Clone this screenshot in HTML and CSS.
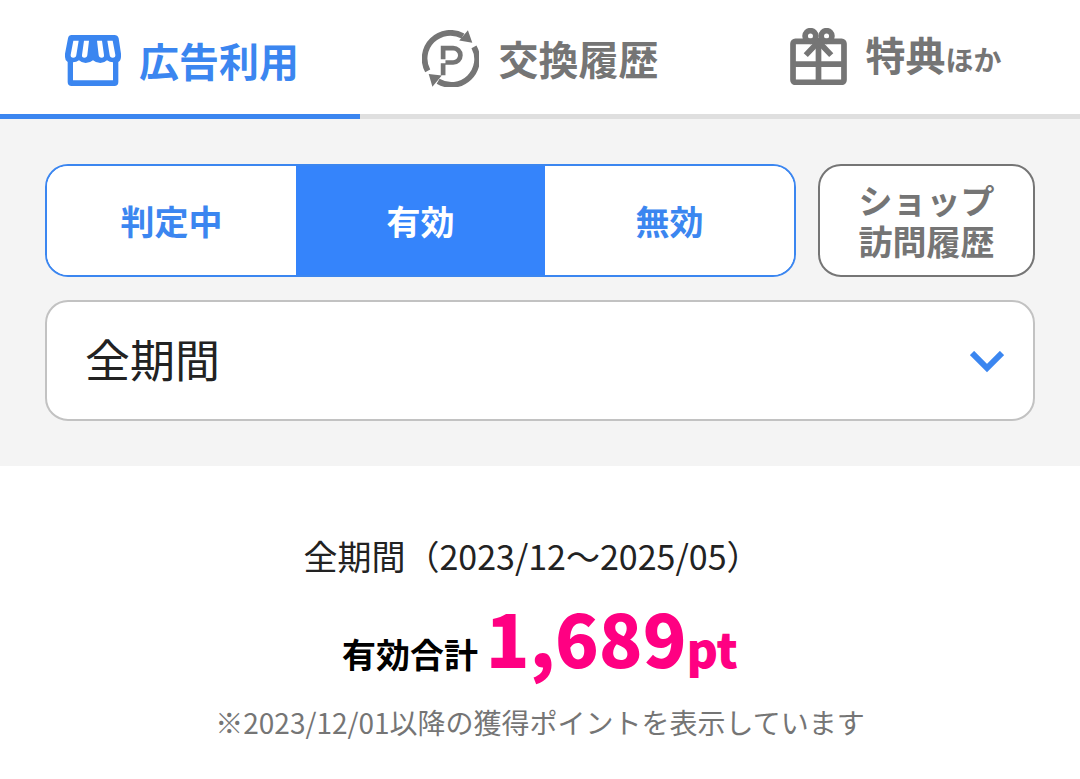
FILE: index.html
```html
<!DOCTYPE html>
<html lang="ja">
<head>
<meta charset="utf-8">
<meta name="viewport" content="width=device-width, initial-scale=1">
<title>広告利用</title>
<link rel="stylesheet" href="styles.css">
</head>
<body>
<nav class="tabs">
  <a class="tab tab-active" href="#ads" aria-current="page">
    <svg class="icon-shop" viewBox="0 0 168 153" aria-hidden="true">
      <path class="solid" d="M20 0H148Q158 0 161 10L168 56V66Q167 78 160 81V141Q160 153 148 153H20Q8 153 8 141V81Q0 76 0 66V56L9 10Q11 0 20 0Z"/>
      <path class="hole" d="M25 17H41L34 60Q33 68 25 68Q16 68 17 59ZM57 17H72L67 60Q66 68 58 68Q50 68 51 60ZM96 17H111L117 60Q118 68 110 68Q102 68 101 60ZM127 17H143L151 59Q152 68 143 68Q135 68 134 60ZM24 82Q34 82 42 76Q50 84 62 84Q75 84 84 76Q93 84 106 84Q118 84 126 76Q134 82 144 82V136H24Z"/>
    </svg>
    <span class="tab-text">広告利用</span>
  </a>
  <a class="tab" href="#exchange">
    <svg class="icon-exchange" viewBox="10 11 170 170" aria-hidden="true">
      <path class="line" d="M27 133A77 77 0 0 1 132 29M165 61A77 77 0 0 1 58 164"/>
      <path class="solid" d="M147 12L160 49L121 42ZM30 142L69 147L41 180Z"/>
      <path class="line letter" d="M73 98V65H103A21 21 0 0 1 103 108H80M73 110V146"/>
    </svg>
    <span class="tab-text">交換履歴</span>
  </a>
  <a class="tab tab-raised" href="#rewards">
    <svg class="icon-gift" viewBox="14 14 168 170" aria-hidden="true">
      <rect class="line" x="22" y="54" width="152" height="122" rx="7"/>
      <path class="line" d="M98 48V176M22 122H174"/>
      <path class="line" d="M60 95L98 55L136 95"/>
      <circle class="line" cx="74" cy="38" r="16"/>
      <circle class="line" cx="122" cy="38" r="16"/>
    </svg>
    <span class="tab-text">特典<small class="tab-small">ほか</small></span>
  </a>
</nav>
<main>
  <section class="filters">
    <div class="filter-row">
      <div class="segments">
        <button class="segment" type="button">判定中</button>
        <button class="segment segment-active" type="button" aria-pressed="true">有効</button>
        <button class="segment" type="button">無効</button>
      </div>
      <button class="visit" type="button">ショップ<br>訪問履歴</button>
    </div>
    <div class="period">
      <select class="period-select" aria-label="期間">
        <option>全期間</option>
      </select>
      <svg class="chevron" viewBox="0 0 34 22" aria-hidden="true"><path d="M2 2L17 17L32 2"/></svg>
    </div>
  </section>
  <section class="summary">
    <p class="range">全期間（2023/12〜2025/05）</p>
    <p class="total">有効合計 <strong class="points">1,689<span class="unit">pt</span></strong></p>
    <p class="note">※2023/12/01以降の獲得ポイントを表示しています</p>
  </section>
</main>
</body>
</html>
```

FILE: styles.css
```css
* { box-sizing: border-box; }

body {
  margin: 0;
  background: #fff;
  color: #222;
  font-family: "Noto Sans CJK JP", sans-serif;
}

button, select {
  font-family: inherit;
  cursor: pointer;
}

.tabs {
  display: grid;
  grid-template-columns: repeat(3, 1fr);
}

.tab {
  display: flex;
  align-items: center;
  justify-content: center;
  gap: 20px;
  height: 119px;
  padding-top: 2px;
  border-bottom: 5px solid #dfdfdf;
  color: #757575;
  font-size: 40px;
  font-weight: 700;
  line-height: 60px;
  text-decoration: none;
}

.tab-active {
  gap: 18px;
  padding: 6px 0 0 4px;
  border-color: #3b86f0;
  color: #3b86f0;
}

.tab-raised {
  gap: 18px;
  padding: 0 8px 2px 0;
}

.tab-small {
  font-size: 28px;
}

.icon-shop { width: 56px; height: 51px; }
.icon-exchange, .icon-gift { width: 57px; height: 57px; }

.solid { fill: currentColor; }
.hole { fill: #fff; }
.line { fill: none; stroke: currentColor; stroke-width: 17; }
.letter { stroke-width: 14; }

.filters {
  padding: 45px;
  background: #f4f4f4;
}

.filter-row {
  display: flex;
  gap: 22px;
  margin-bottom: 23px;
}

.segments {
  display: grid;
  flex: 1;
  grid-template-columns: repeat(3, 1fr);
  overflow: hidden;
  border: 2px solid #3b86f0;
  border-radius: 23px;
  background: #fff;
}

.segment {
  padding: 0;
  border: 0;
  background: #fff;
  color: #3b86f0;
  font-size: 34px;
  font-weight: 700;
}

.segment-active {
  background: #3584fb;
  color: #fff;
}

.visit {
  width: 217px;
  height: 113px;
  padding: 0 0 2px;
  border: 2px solid #757575;
  border-radius: 23px;
  background: #fff;
  color: #757575;
  font-size: 34px;
  font-weight: 700;
  line-height: 41px;
}

.period {
  position: relative;
}

.period-select {
  display: block;
  width: 100%;
  height: 121px;
  padding: 0 96px 4px 38px;
  border: 2px solid #c2c2c2;
  border-radius: 23px;
  appearance: none;
  background: #fff;
  color: #222;
  font-size: 45px;
}

.chevron {
  position: absolute;
  top: 51px;
  right: 31px;
  width: 34px;
  height: 22px;
  fill: none;
  stroke: #3b86f0;
  stroke-width: 6;
  pointer-events: none;
}

.summary {
  padding: 64px 24px 32px;
  text-align: center;
}

.range, .total, .note { margin: 0; }

.range {
  padding-right: 16px;
  font-size: 34px;
  line-height: 52px;
}

.total {
  color: #000;
  font-size: 34px;
  font-weight: 700;
  line-height: 110px;
}

.points {
  color: #ff0082;
  font-size: 72px;
}

.unit { font-size: 48px; }

.note {
  margin-top: -8px;
  color: #757575;
  font-size: 28px;
  line-height: 42px;
}
```
